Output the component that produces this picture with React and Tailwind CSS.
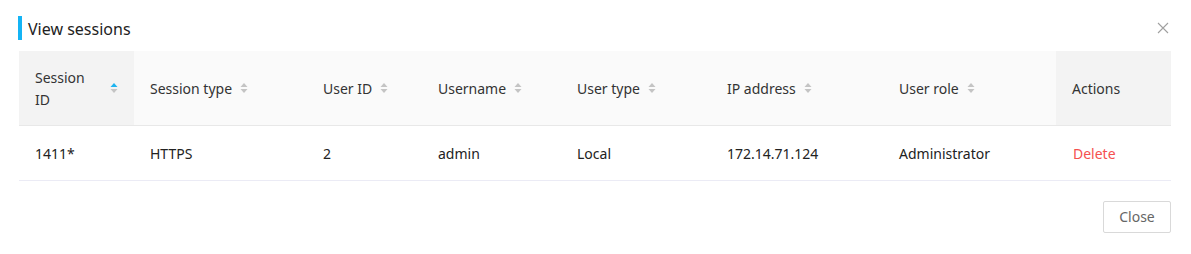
import React from "react";

const cols = [
  { label: "Session ID", w: 115, sort: "asc", bg: "bg-[#f3f3f3]" },
  { label: "Session type", w: 173, sort: "none" },
  { label: "User ID", w: 115, sort: "none" },
  { label: "Username", w: 139, sort: "none" },
  { label: "User type", w: 150, sort: "none" },
  { label: "IP address", w: 172, sort: "none" },
  { label: "User role", w: 173, sort: "none" },
  { label: "Actions", w: 115, bg: "bg-[#f3f3f3]" },
];

const row = ["1411*", "HTTPS", "2", "admin", "Local", "172.14.71.124", "Administrator"];

function SortIcon({ active }) {
  return (
    <svg width="8" height="11" viewBox="0 0 8 11" className="shrink-0">
      <path d="M4 0 L7.5 4 L0.5 4 Z" fill={active ? "#1eb4f0" : "#c4c4c4"} />
      <path d="M0.5 6 L7.5 6 L4 10 Z" fill="#c4c4c4" />
    </svg>
  );
}

export default function App() {
  return (
    <div
      className="w-[1191px] h-[254px] bg-white text-[14px]"
      style={{ fontFamily: '"Noto Sans", "Open Sans", sans-serif' }}
    >
      <div className="flex items-center justify-between pl-[18px] pr-[22px] pt-[16px] h-[51px] pb-[11px]">
        <div className="flex items-center h-[24px]">
          <div className="w-[4px] h-[24px] bg-[#14b4f5]" />
          <div className="ml-[6px] pt-[2px] text-[16px] text-[#222] leading-[24px]">View sessions</div>
        </div>
        <svg width="12" height="12" viewBox="0 0 12 12">
          <path d="M1 1 L11 11 M11 1 L1 11" stroke="#a0a0a0" strokeWidth="1.1" />
        </svg>
      </div>
      <div className="px-[19px]">
        <table className="table-fixed border-collapse w-[1152px]">
          <colgroup>
            {cols.map((c) => (
              <col key={c.label} style={{ width: c.w }} />
            ))}
          </colgroup>
          <thead>
            <tr className="h-[74px] border-b border-[#e8e8e8]">
              {cols.map((c) => (
                <th
                  key={c.label}
                  className={`${c.bg || "bg-[#fafafa]"} px-[16px] pt-[2px] text-left font-normal text-[#333] leading-[22px]`}
                >
                  <div className="flex items-center gap-[8px]">
                    <span className={c.sort === "asc" ? "flex-1" : ""}>{c.label}</span>
                    {c.sort && <SortIcon active={c.sort === "asc"} />}
                  </div>
                </th>
              ))}
            </tr>
          </thead>
          <tbody>
            <tr className="h-[55px] border-b border-[#ebebf5]">
              {row.map((v, i) => (
                <td key={i} className="px-[16px] pt-[2px] text-[#222]">
                  {v}
                </td>
              ))}
              <td className="px-[17px] pt-[2px] text-[#f5504f]">Delete</td>
            </tr>
          </tbody>
        </table>
      </div>
      <div className="flex justify-end pr-[20px] pt-[20px]">
        <button className="h-[32px] w-[68px] border border-[#d9d9d9] rounded-[2px] text-[#666] bg-white">
          Close
        </button>
      </div>
    </div>
  );
}
